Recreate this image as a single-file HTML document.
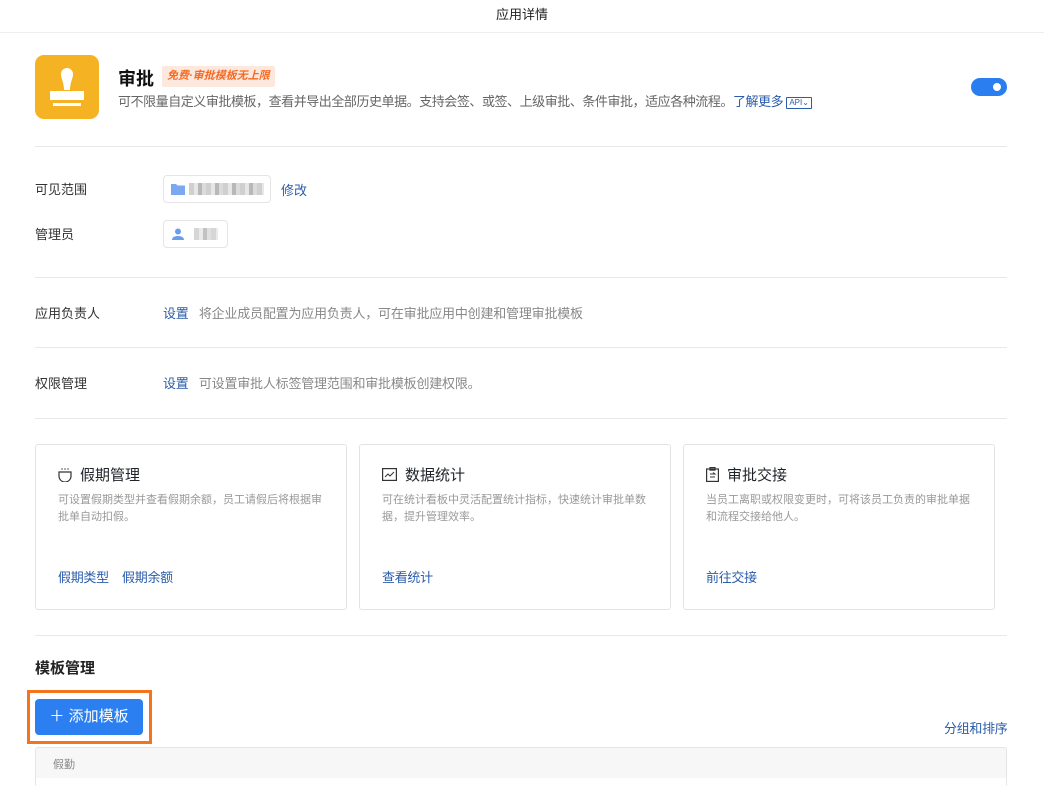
<!DOCTYPE html>
<html><head><meta charset="utf-8"><style>
*{margin:0;padding:0;box-sizing:border-box}
body{width:1044px;height:781px;overflow:hidden;background:#fff;font-family:"Liberation Sans","Noto Sans CJK SC",sans-serif;color:#1f2329;position:relative}
.a{position:absolute;white-space:nowrap}
.hr{position:absolute;left:35px;width:972px;height:1px;background:#e8e8e8}
.lbl{font-size:13px;color:#333}
.link{color:#2a5caa}
.card{position:absolute;top:444px;width:312px;height:166px;border:1px solid #e3e3e3;border-radius:3px}
.card .t{position:absolute;left:22px;top:19px;font-size:15px;color:#1f2329;display:flex;align-items:center;gap:8px}
.card .d{position:absolute;left:22px;top:47px;width:270px;font-size:11px;line-height:17px;color:#999;white-space:normal}
.card .l{position:absolute;left:22px;top:122px;font-size:13px;color:#2a5caa;letter-spacing:-0.3px}
.blur{display:inline-block;height:12px;background:repeating-linear-gradient(90deg,#bbb 0 5px,#ddd 5px 9px,#999 9px 13px,#ccc 13px 17px)}
</style></head><body>
<div class="a" style="left:0;width:1044px;text-align:center;top:4px;font-size:13px;color:#222">应用详情</div>
<div style="position:absolute;left:0;top:32px;width:1044px;height:1px;background:#eee"></div>

<div class="a" style="left:35px;top:55px;width:64px;height:64px;border-radius:9px;background:#f5b223">
<svg width="64" height="64" viewBox="0 0 64 64"><path d="M26 19a6 6 0 0 1 12 0c0 5-3 8-3 16h-6c0-8-3-11-3-16z" fill="#fff"/><rect x="15" y="36" width="34" height="9" fill="#fff"/><rect x="18" y="48" width="28" height="3" fill="#fff"/></svg></div>
<div class="a" style="left:118px;top:65px;font-size:18px;font-weight:bold;color:#111">审批</div>
<div class="a" style="left:162px;top:66px;height:21px;padding:0 5px;line-height:21px;background:#fde8dd;color:#f56a24;font-size:11px;font-style:italic;font-weight:bold;border-radius:2px">免费·审批模板无上限</div>
<div class="a" style="left:118px;top:91px;font-size:13px;color:#666;letter-spacing:-0.45px">可不限量自定义审批模板，查看并导出全部历史单据。支持会签、或签、上级审批、条件审批，适应各种流程。<span class="link">了解更多</span> <span style="display:inline-block;border:1px solid #2a5caa;color:#2a5caa;font-size:8px;line-height:10px;padding:0 2px;border-radius:1px;vertical-align:1px;letter-spacing:0">API⌄</span></div>
<div class="a" style="left:971px;top:78px;width:36px;height:18px;border-radius:9px;background:#2a7ef0"><div style="position:absolute;right:6px;top:5px;width:8px;height:8px;border-radius:50%;background:#fff"></div></div>

<div class="hr" style="top:146px"></div>
<div class="a lbl" style="left:35px;top:179px">可见范围</div>
<div class="a" style="left:163px;top:175px;width:108px;height:28px;border:1px solid #e5e5e5;border-radius:4px">
<svg class="a" style="left:7px;top:7px" width="14" height="12" viewBox="0 0 14 12"><path d="M0 1h5l1.5 1.5H14V12H0z" fill="#7aa9f0"/></svg>
<span class="blur a" style="left:25px;top:7px;width:75px;opacity:.7"></span></div>
<div class="a link" style="left:281px;top:180px;font-size:13px">修改</div>
<div class="a lbl" style="left:35px;top:224px">管理员</div>
<div class="a" style="left:163px;top:220px;width:65px;height:28px;border:1px solid #e5e5e5;border-radius:4px">
<svg class="a" style="left:8px;top:7px" width="12" height="13" viewBox="0 0 12 13"><circle cx="6" cy="3.5" r="3" fill="#6a9ee8"/><path d="M0 12c0-3 3-4 6-4s6 1 6 4z" fill="#6a9ee8"/></svg>
<span class="blur a" style="left:30px;top:7px;width:24px;opacity:.6"></span></div>

<div class="hr" style="top:277px"></div>
<div class="a lbl" style="left:35px;top:303px">应用负责人</div>
<div class="a" style="left:163px;top:303px;font-size:13px;color:#888;letter-spacing:-0.2px"><span class="link">设置</span>&nbsp;&nbsp;&nbsp;将企业成员配置为应用负责人，可在审批应用中创建和管理审批模板</div>
<div class="hr" style="top:347px"></div>
<div class="a lbl" style="left:35px;top:373px">权限管理</div>
<div class="a" style="left:163px;top:373px;font-size:13px;color:#888;letter-spacing:-0.2px"><span class="link">设置</span>&nbsp;&nbsp;&nbsp;可设置审批人标签管理范围和审批模板创建权限。</div>
<div class="hr" style="top:418px"></div>

<div class="card" style="left:35px"><div class="t"><svg width="14" height="15" viewBox="0 0 14 15" fill="none" stroke="#333" stroke-width="1.2"><path d="M1 5h12v4a6 6 0 0 1-12 0z"/><path d="M4 1v2M7 1v2M10 1v2" stroke-width="0.8"/></svg>假期管理</div><div class="d">可设置假期类型并查看假期余额，员工请假后将根据审批单自动扣假。</div><div class="l">假期类型&nbsp;&nbsp;&nbsp;&nbsp;假期余额</div></div>
<div class="card" style="left:359px"><div class="t"><svg width="15" height="13" viewBox="0 0 15 13" fill="none" stroke="#333" stroke-width="1.2"><rect x="0.6" y="0.6" width="13.8" height="11.8"/><path d="M3 9l3-3 2 2 4-4" stroke-width="1"/></svg>数据统计</div><div class="d">可在统计看板中灵活配置统计指标，快速统计审批单数据，提升管理效率。</div><div class="l">查看统计</div></div>
<div class="card" style="left:683px"><div class="t"><svg width="13" height="15" viewBox="0 0 13 15" fill="none" stroke="#333" stroke-width="1.2"><rect x="0.6" y="2" width="11.8" height="12.4"/><rect x="4" y="0.6" width="5" height="2.5"/><path d="M4 7h5l-2-1.5M9 10H4" stroke-width="1"/></svg>审批交接</div><div class="d">当员工离职或权限变更时，可将该员工负责的审批单据和流程交接给他人。</div><div class="l">前往交接</div></div>

<div class="hr" style="top:635px"></div>
<div class="a" style="left:35px;top:657px;font-size:15px;font-weight:bold;color:#222">模板管理</div>
<div class="a" style="left:27px;top:690px;width:125px;height:54px;border:3px solid #f5731a"></div>
<div class="a" style="left:35px;top:699px;width:108px;height:36px;border-radius:4px;background:#2b7ff0;color:#fff;font-size:15px;line-height:36px;text-align:center">＋ 添加模板</div>
<div class="a link" style="left:944px;top:718px;font-size:13px;letter-spacing:-0.3px">分组和排序</div>
<div class="a" style="left:35px;top:747px;width:972px;height:40px;border:1px solid #e5e5e5;background:#f7f7f7;border-radius:3px"><span class="a" style="left:17px;top:8px;font-size:11px;color:#888">假勤</span><div style="position:absolute;left:0;right:0;top:30px;height:10px;background:#fff"></div></div>
</body></html>
